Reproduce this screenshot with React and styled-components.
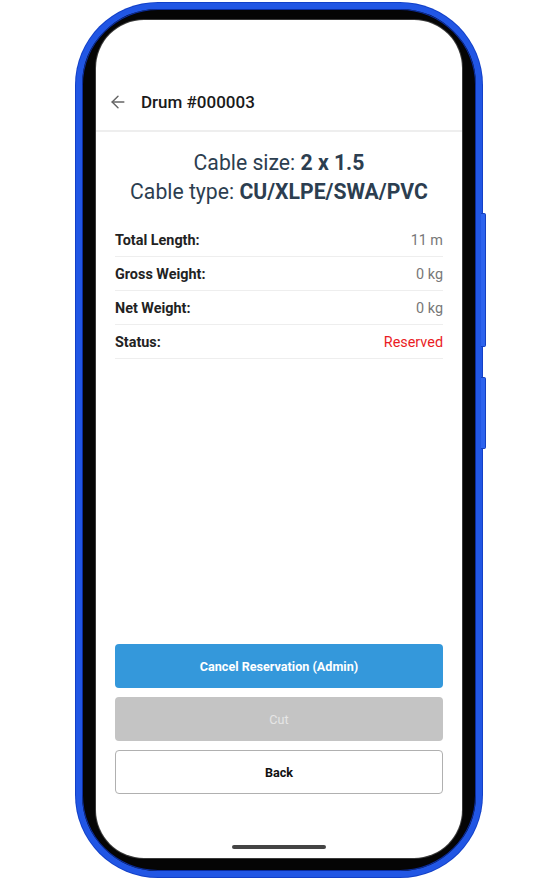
import React from "react";
import styled, { createGlobalStyle } from "styled-components";
import { ArrowLeft } from "lucide-react";

const GlobalStyle = createGlobalStyle`
  html, body {
    margin: 0;
    padding: 0;
    background: #ffffff;
  }
  body {
    font-family: Roboto, "Noto Sans", "Liberation Sans", sans-serif;
  }
`;

const Page = styled.div`
  width: 557px;
  height: 880px;
  padding: 3px 0 0 76px;
  box-sizing: border-box;
`;

const Phone = styled.div`
  position: relative;
  width: 406px;
  height: 874px;
  box-sizing: border-box;
  border: 6px solid #2156e4;
  border-radius: 82px;
  background: #050505;
  padding: 11px 14px 13px;
  box-shadow: inset 0 0 0 1px #0b2c9e, 0 0 0 1px #1240c8;
`;

const SideButton = styled.div`
  position: absolute;
  right: -10px;
  top: ${(p) => p.top}px;
  width: 4px;
  height: ${(p) => p.length}px;
  background: #2d63ee;
  border: 1px solid #1440c0;
  border-left: none;
  border-radius: 0 2px 2px 0;
`;

const Screen = styled.div`
  width: 366px;
  height: 838px;
  background: #ffffff;
  border-radius: 48px;
  overflow: hidden;
  display: flex;
  flex-direction: column;
  box-shadow: 0 0 0 1px #3a3a3a;
`;

const StatusSpace = styled.div`
  height: 55px;
  flex-shrink: 0;
`;

const Header = styled.div`
  height: 53px;
  display: flex;
  align-items: center;
  padding: 0 0 2px 12px;
  border-bottom: 2px solid #eeeeee;
  flex-shrink: 0;
`;

const BackIcon = styled.span`
  display: flex;
  color: #666666;
  margin-right: 13px;
`;

const Title = styled.h1`
  margin: 0;
  font-size: 17px;
  font-weight: 500;
  color: #1a1a1a;
`;

const Content = styled.div`
  flex: 1;
  display: flex;
  flex-direction: column;
  padding: 16px 19px 0;
`;

const Heading = styled.div`
  text-align: center;
  font-size: 21.2px;
  line-height: 29px;
  color: #2c3e50;

  b {
    font-weight: 700;
  }
`;

const Table = styled.div`
  margin-top: 17px;
`;

const Row = styled.div`
  height: 34px;
  box-sizing: border-box;
  padding-top: 2px;
  display: flex;
  align-items: center;
  justify-content: space-between;
  border-bottom: 1px solid #eeeeee;
  font-size: 14.4px;
`;

const Label = styled.span`
  font-weight: 700;
  color: #222222;
`;

const Value = styled.span`
  color: ${(p) => (p.danger ? "#ea1c24" : "#777777")};
`;

const Actions = styled.div`
  margin-top: auto;
  display: flex;
  flex-direction: column;
  gap: 9px;
`;

const Button = styled.button`
  height: 44px;
  border-radius: 4px;
  font-family: inherit;
  font-size: 12.6px;
  cursor: pointer;
  border: ${(p) => (p.variant === "outline" ? "1px solid #b0b0b0" : "none")};
  background: ${(p) =>
    p.variant === "primary"
      ? "#3498db"
      : p.variant === "disabled"
      ? "#c4c4c4"
      : "#ffffff"};
  color: ${(p) =>
    p.variant === "primary"
      ? "#ffffff"
      : p.variant === "disabled"
      ? "#e6e6e6"
      : "#111111"};
  font-weight: ${(p) => (p.variant === "disabled" ? 400 : 700)};
`;

const Footer = styled.div`
  height: 64px;
  display: flex;
  align-items: flex-end;
  justify-content: center;
  padding-bottom: 9px;
  box-sizing: border-box;
  flex-shrink: 0;
`;

const HomeBar = styled.div`
  width: 94px;
  height: 4px;
  border-radius: 2px;
  background: #444444;
`;

const details = [
  { label: "Total Length:", value: "11 m" },
  { label: "Gross Weight:", value: "0 kg" },
  { label: "Net Weight:", value: "0 kg" },
  { label: "Status:", value: "Reserved", danger: true },
];

export default function App() {
  return (
    <>
      <GlobalStyle />
      <Page>
        <Phone>
          <SideButton top={204} length={132} />
          <SideButton top={368} length={70} />
          <Screen>
            <StatusSpace />
            <Header>
              <BackIcon>
                <ArrowLeft size={20} strokeWidth={1.75} />
              </BackIcon>
              <Title>Drum #000003</Title>
            </Header>
            <Content>
              <Heading>
                Cable size: <b>2 x 1.5</b>
                <br />
                Cable type: <b>CU/XLPE/SWA/PVC</b>
              </Heading>
              <Table>
                {details.map((d) => (
                  <Row key={d.label}>
                    <Label>{d.label}</Label>
                    <Value danger={d.danger}>{d.value}</Value>
                  </Row>
                ))}
              </Table>
              <Actions>
                <Button variant="primary">Cancel Reservation (Admin)</Button>
                <Button variant="disabled">Cut</Button>
                <Button variant="outline">Back</Button>
              </Actions>
            </Content>
            <Footer>
              <HomeBar />
            </Footer>
          </Screen>
        </Phone>
      </Page>
    </>
  );
}
